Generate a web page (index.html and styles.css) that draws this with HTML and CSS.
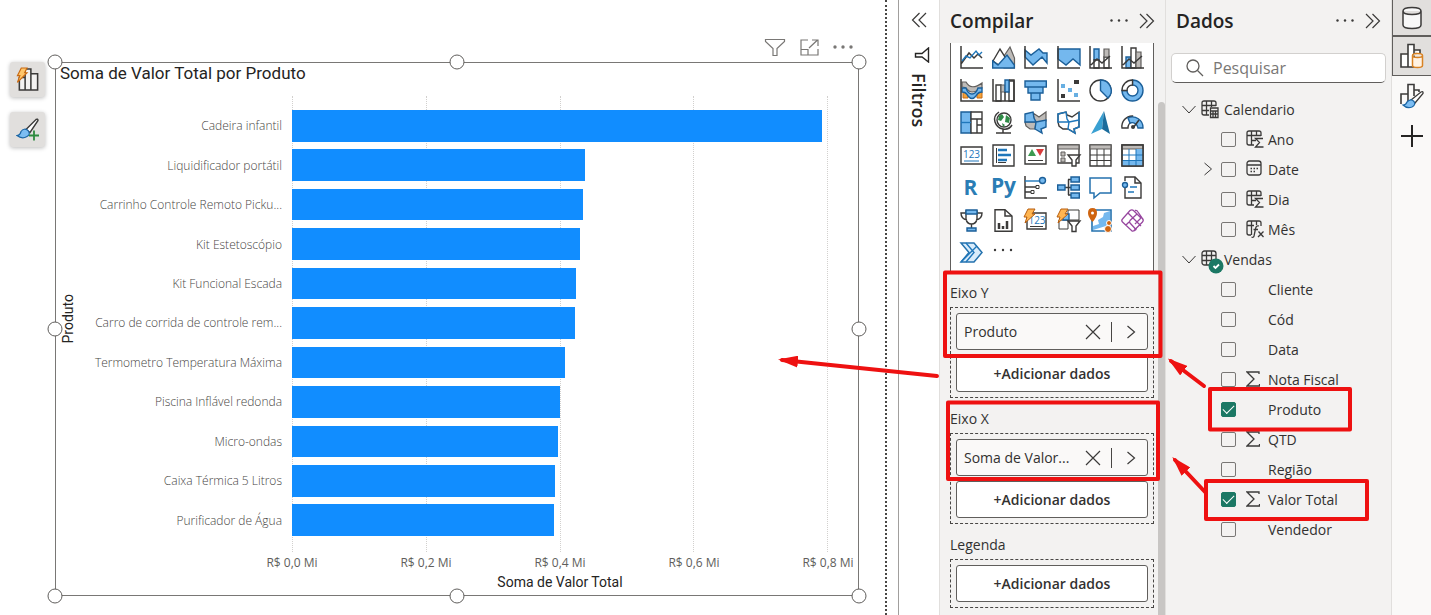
FILE: index.html
```html
<!DOCTYPE html>
<html lang="pt-BR">
<head>
<meta charset="utf-8">
<title>Soma de Valor Total por Produto</title>
<link rel="stylesheet" href="styles.css">
</head>
<body>
<svg class="sprite" aria-hidden="true">
  <symbol id="chev-right" viewBox="0 0 10 14"><path d="M1.500 1L8.500 7L1.500 13"/></symbol>
  <symbol id="chev-down" viewBox="0 0 14 9"><path d="M.5 1L7 8L13.500 1"/></symbol>
  <symbol id="chev-double" viewBox="0 0 16 16"><path d="M1 1L8 8L1 15M7.500 1L14.500 8L7.500 15"/></symbol>
  <symbol id="close" viewBox="0 0 16 16"><path d="M1 1L15 15M15 1L1 15"/></symbol>
  <symbol id="sigma" viewBox="0 0 14 16"><path d="M13 3V1H1L8 8L1 15H13.500V13"/></symbol>
  <symbol id="col-sigma" viewBox="0 0 18 18"><path d="M15 6V3Q15 1 13 1H3Q1 1 1 3V13Q1 15 3 15H8M5.500 1V15M10.500 1V5M1 5.500H15M5.500 10.500H10M17 8.500H9.500L13.500 12.500L9.500 17H17.500"/></symbol>
</svg>

<div class="app">
  <main class="canvas">
    <div class="visual-tools">
      <button class="tool" aria-label="Criar visual"><svg viewBox="0 0 24 26"><g fill="#f3f2f1" stroke="#3b3a39" stroke-width="1.600"><path d="M3 11h6v13H3zM9 2h6v22H9zM15 7h7v17h-7z"/></g><path d="M5 1h6L8.500 6H11L1 16L3.500 9H1z" fill="#ffc66b" stroke="#c96a12" stroke-width="1.200"/></svg></button>
      <button class="tool" aria-label="Formatar visual"><svg viewBox="0 0 24 24"><path d="M10 12L20 2q2-1 2 1L14 15z" fill="#fff" stroke="#3b3a39" stroke-width="1.400"/><path d="M1 18q3 0 4-4 3-4 7-1 3 4-1 6-5 3-10-1z" fill="#7cbdf2" stroke="#1b66a5" stroke-width="1.200"/><path d="M18 13v10M13 18h10" stroke="#2d8a3e" stroke-width="1.800"/></svg></button>
    </div>
    <div class="visual-wrap">
      <div class="visual-header">
        <button class="bare" aria-label="Filtros do visual"><svg width="22" height="19" viewBox="0 0 22 19"><path d="M1.500 1.500h19v2L13 10.500V17.500H9V10.500L1.500 3.500z"/></svg></button>
        <button class="bare" aria-label="Modo de foco"><svg width="19" height="17" viewBox="0 0 19 17"><path d="M8 1H1V16H18V10M1 10.500H8V16M9 9L17.500 1M12 1H18V7"/></svg></button>
        <button class="bare" aria-label="Mais opções"><svg width="20" height="4" viewBox="0 0 20 4"><g class="dots"><circle cx="2" cy="2" r="1.700"/><circle cx="10" cy="2" r="1.700"/><circle cx="18" cy="2" r="1.700"/></g></svg></button>
      </div>
      <section class="visual">
        <h1 class="chart-title">Soma de Valor Total por Produto</h1>
        <div class="chart-body">
          <div class="y-title"><span>Produto</span></div>
          <div class="plot">
            <div class="gridlines"><i></i><i></i><i></i><i></i></div>
            <span class="cat r1">Cadeira infantil</span><div class="bar r1" style="width:98.9%"></div>
            <span class="cat r2">Liquidificador portátil</span><div class="bar r2" style="width:54.7%"></div>
            <span class="cat r3">Carrinho Controle Remoto Picku...</span><div class="bar r3" style="width:54.2%"></div>
            <span class="cat r4">Kit Estetoscópio</span><div class="bar r4" style="width:53.7%"></div>
            <span class="cat r5">Kit Funcional Escada</span><div class="bar r5" style="width:53%"></div>
            <span class="cat r6">Carro de corrida de controle rem...</span><div class="bar r6" style="width:52.8%"></div>
            <span class="cat r7">Termometro Temperatura Máxima</span><div class="bar r7" style="width:51%"></div>
            <span class="cat r8">Piscina Inflável redonda</span><div class="bar r8" style="width:50%"></div>
            <span class="cat r9">Micro-ondas</span><div class="bar r9" style="width:49.6%"></div>
            <span class="cat r10">Caixa Térmica 5 Litros</span><div class="bar r10" style="width:49.1%"></div>
            <span class="cat r11">Purificador de Água</span><div class="bar r11" style="width:48.9%"></div>
          </div>
        </div>
        <div class="x-axis">
          <div class="ticks"><span><b>R$ 0,0 Mi</b></span><span><b>R$ 0,2 Mi</b></span><span><b>R$ 0,4 Mi</b></span><span><b>R$ 0,6 Mi</b></span><span><b>R$ 0,8 Mi</b></span></div>
          <div class="x-title">Soma de Valor Total</div>
        </div>
        <i class="handle tl"></i><i class="handle tc"></i><i class="handle tr"></i><i class="handle ml"></i><i class="handle mr"></i><i class="handle bl"></i><i class="handle bc"></i><i class="handle br"></i>
      </section>
    </div>
  </main>

  <aside class="filters">
    <button class="bare" aria-label="Expandir filtros"><svg class="flip" width="16" height="16"><use href="#chev-double"/></svg></button>
    <svg class="funnel" width="16" height="16" viewBox="0 0 16 16"><path d="M14.500 1V15L8 10H1.500V6.500H8L14.500 1z"/></svg>
    <h2>Filtros</h2>
  </aside>

  <section class="build">
    <header class="pane-head">
      <h2>Compilar</h2>
      <button class="bare more" aria-label="Mais opções"><svg width="18" height="3" viewBox="0 0 18 3"><g class="dots"><circle cx="1.500" cy="1.500" r="1.200"/><circle cx="9" cy="1.500" r="1.200"/><circle cx="16.500" cy="1.500" r="1.200"/></g></svg></button>
      <button class="bare" aria-label="Recolher Compilar"><svg width="16" height="16"><use href="#chev-double"/></svg></button>
    </header>
    <div class="build-scroll">
      <div class="build-body">
        <div class="gallery">
          <svg viewBox="0 0 23 23"><path class="k" d="M1 0V22H23M1 18L9 7L14 12L18 8L22 12"/><path class="b" d="M2 15L6 10L10 12L16 5L19 9L22 6"/></svg>
          <svg viewBox="0 0 23 23"><path class="g" d="M12 10L18 1L22.500 12V22H12z"/><path class="w" d="M1 15L8 3L15 14L8 20z"/><path class="f" d="M.7 22V15L6 19L15 9L22.300 19V22z"/></svg>
          <svg viewBox="0 0 23 23"><path class="f" d="M1 4L7 9L15 3L19 7H23V17L18 11L9 19L1 11z"/><path class="k" d="M1 0V22H23"/></svg>
          <svg viewBox="0 0 23 23"><path class="f" d="M1 3H23V19L16 13L9 19L1 13z"/><path class="k" d="M1 0V22H23"/></svg>
          <svg viewBox="0 0 23 23"><path class="f" d="M5 3H10V14H5z"/><path class="w" d="M5 14H10V22H5zM15 11H20V22H15z"/><path class="g" d="M15 3H20V11H15z"/><path class="k" d="M1 0V22H23M2 19L8 13L13 17L21 10"/></svg>
          <svg viewBox="0 0 23 23"><path class="f" d="M5 11H10V22H5z"/><path class="w" d="M10 2H15V22H10z"/><path class="g" d="M15 6H20V22H15z"/><path class="k" d="M1 0V22H23M2 19L8 13L13 17L21 10"/></svg>

          <svg viewBox="0 0 23 23"><path class="o" d="M3 13H8V19H3zM17 13H22V19H17z"/><path class="g" d="M2 3H6Q11 12 22 4V9Q13 15 9 12Q6 8 2 8z"/><path class="f" d="M2 9H6Q8 15 12 15T18 9H22V13Q18 13 16 17Q12 22 8 17Q6 13 2 13z"/><path class="k" d="M1 0V22H23"/></svg>
          <svg viewBox="0 0 23 23"><path class="w" d="M4 6H9V22H4zM17 2H22V22H17z"/><path class="g" d="M9 6H13V13H9z"/><path class="f" d="M13 1H17V13H13z"/><path class="k" d="M1 0V22H23M17 1H22V22M13 13V22"/></svg>
          <svg viewBox="0 0 23 23"><path class="f" d="M1 2H22.300V8H1zM4 8H19V14H4zM7 14H16V21H7z"/></svg>
          <svg viewBox="0 0 23 23"><path class="k" d="M1 0V22H23"/><path fill="#3b3a39" d="M17 1h5v4h-5zM4 15h4v4H4z"/><path fill="#68afe2" d="M4 5h4v4H4zM11 9h4v4h-4zM17 14h4v4h-4z"/></svg>
          <svg viewBox="0 0 23 23"><circle class="w" cx="11.500" cy="11.500" r="10.500"/><path class="f" d="M11.500 1A10.500 10.500 0 0 1 19 19L11.500 11.500z"/></svg>
          <svg viewBox="0 0 23 23"><path class="f" fill-rule="evenodd" d="M11.500 1A10.500 10.500 0 1 1 1 11.500H6A5.500 5.500 0 1 0 11.500 6z"/><path class="w" d="M1 11.500A10.500 10.500 0 0 1 11.500 1V6A5.500 5.500 0 0 0 6 11.500z"/></svg>

          <svg viewBox="0 0 23 23"><path class="f" d="M1 1H11V22H1z"/><path class="w" d="M11 1H22V8H11zM11 8H17V22H11zM17 8H22V14H17zM17 14H22V22H17z"/><path class="b" d="M1 11.500H11"/></svg>
          <svg viewBox="0 0 23 23"><circle class="w" cx="12" cy="9" r="7"/><path fill="#2f8a46" d="M7 5L10 3L12 6L9 10L6 9zM14 4L18 7L17 12L13 11zM10 12L13 14L11 16z"/><path class="k" d="M7 1Q1 5 3 11T11 18Q17 19 20 14M11 18V22M4 22H19"/></svg>
          <svg viewBox="0 0 23 23"><path class="g" d="M9 2L15 6L22 1V10L13 12L10 8zM1 11H12L11 18H6L2 15z"/><path class="f" d="M1 3L9 1L10 7L12 11H1zM12 11L22 9V16L17 18L18 22L11 18z"/></svg>
          <svg viewBox="0 0 23 23"><path class="w" d="M1 3L9 1L10 4L15 6L22 1V16L17 18L18 22L11 18H6L2 15L1 11z"/><path class="b" d="M1 3L9 1L10 8L12 11H1zM12 11L22 9M12 11L11 18L18 22L17 18L22 16V1"/></svg>
          <svg viewBox="0 0 23 23"><path d="M15 0L2 23L13 18z" fill="#39a0d2"/><path d="M15 0L21 23L13 18z" fill="#1b6c9c"/></svg>
          <svg viewBox="0 0 23 23"><path class="w" d="M1 17A10.500 10.500 0 0 1 11.500 5V11A5 6 0 0 0 7 17z"/><path class="f" d="M7 7A10.500 10.500 0 0 1 22 17H17A6 6 0 0 0 9 12z"/><path class="k" d="M12 17L18 9"/><circle cx="12" cy="16" r="2" fill="#3b3a39"/></svg>

          <svg viewBox="0 0 23 23"><path class="w" d="M1 3H22V20H1z"/><text class="num" x="11.500" y="14">123</text><path class="b thin" d="M4 17H19"/></svg>
          <svg viewBox="0 0 23 23"><path class="w" d="M1 1H22V22H1z"/><path class="k thin" d="M4.500 4V19"/><path d="M6 6h9M6 11h13M6 16h9" stroke="#1f77bb" stroke-width="2.500"/><path class="thin k" d="M6 18.500H14"/></svg>
          <svg viewBox="0 0 23 23"><path class="w" d="M1 2H22V20H1z"/><path d="M4 12L8 5L12 12z" fill="#3c9a50"/><path d="M12 5H20L16 12z" fill="#d93b3b"/><path class="k thin" d="M4 16.500H19"/></svg>
          <svg viewBox="0 0 23 23"><path class="w" d="M1 1H22V19H1z"/><path class="g" d="M1 1H22V5H1z"/><path class="g thin" d="M4 8H8V12H4zM4 14H8V18H4z"/><path class="w" d="M11 11H23L19 16V22H15V16z"/></svg>
          <svg viewBox="0 0 23 23"><path class="w" d="M1 1H22V22H1z"/><path class="g" d="M1 1H22V5H1z"/><path class="k thin" d="M1 11H22M1 16.500H22M8 5V22M15 5V22"/></svg>
          <svg viewBox="0 0 23 23"><path class="w" d="M1 1H22V22H1z"/><path class="g" d="M1 1H22V5H1z"/><path fill="#74b8ee" d="M15 5H22V22H1V16.500H15z"/><path class="b thin" d="M1 11H22M1 16.500H22M8 5V22M15 5V22"/><path class="k" d="M1 1H22V22H1z"/></svg>

          <svg viewBox="0 0 23 23"><text class="letters" x="10.500" y="19">R</text></svg>
          <svg viewBox="0 0 23 23"><text class="letters" x="11.500" y="17">Py</text></svg>
          <svg viewBox="0 0 23 23"><path class="k" d="M1 0V22H23M1 11H13M1 16H7"/><path class="b" d="M1 5H16"/><circle class="f" cx="18.500" cy="4.500" r="3"/><path class="w thin" d="M12 9.500h3v3h-3zM7 14.500h3v3H7z"/></svg>
          <svg viewBox="0 0 23 23"><path class="k" d="M8 11.500H15M11 3.500H15M11 19H15M11.500 3.500V19"/><path class="f" d="M.7 9H8V14H.7zM14 1H22.300V6H14zM14 9H22.300V14H14zM14 17H22.300V22H14z"/></svg>
          <svg viewBox="0 0 23 23"><path d="M1 2H22V17H11L5 22V17H1z" fill="#fff" stroke="#2472ae" stroke-width="1.500"/></svg>
          <svg viewBox="0 0 23 23"><path class="w" d="M4 5V1H14L20 7V22H4V12"/><path class="k" d="M14 1V7H20"/><circle class="f" cx="4" cy="9" r="2.500"/><path class="b" d="M9 11H16M7 16H13"/></svg>

          <svg viewBox="0 0 23 23"><path class="w" d="M6 2H17V10Q16 15 11.500 15T6 10zM6 4H1Q1 10 7 11M17 4H22Q22 10 16 11M11.500 15V19"/><path class="f" d="M6 1H17V5H6zM7 19H16V22H7z"/></svg>
          <svg viewBox="0 0 23 23"><path class="w" d="M3 0.700H13L20 7V22.300H3z"/><path class="k" d="M13 1V7H20"/><path d="M7 14V20M11 17V20M15 12V20" stroke="#3b3a39" stroke-width="2.500"/></svg>
          <svg viewBox="0 0 23 23"><path class="w" d="M3 4H22V20H3z"/><text class="num" x="13" y="15">123</text><path class="k thin" d="M6 17.500H19"/><path class="bolt" d="M4 0H11L8 5H11L1 14L3 8H0z"/></svg>
          <svg viewBox="0 0 23 23"><path class="w thin" d="M11 1H22V11H11zM2 11H11V20H2z"/><path class="f" d="M6 5H12V11H6z"/><path class="w" d="M11 12H23L19 17V22.500H15V17z"/><path class="bolt" d="M4 0H11L8 5H11L1 14L3 8H0z"/></svg>
          <svg viewBox="0 0 23 23"><path d="M3 1H22V22H3z" fill="#fff" stroke="#2472ae" stroke-width="1.600"/><path fill="#74b8ee" d="M15 4L21 2V11L17 17L4 21V17L10 15L9 11L14 8z"/><path fill="#cf6410" d="M-1 4Q-1 -1 3.500 -1T8 4Q8 8 3.500 13Q-1 8 -1 4z"/><circle cx="3.500" cy="4" r="1.500" fill="#fff"/><circle cx="20" cy="14" r="2.500" fill="#cf6410" stroke="#fff" stroke-width="1"/><circle cx="19" cy="20" r="3.500" fill="#cf6410" stroke="#fff" stroke-width="1"/></svg>
          <svg viewBox="0 0 23 23"><path class="p" d="M9 1.500Q11 0 13 2L16 5L9 11.500Q8 13 9 14L15 20.500Q13 22.500 11 22L1.500 13Q0 11.500 1.500 10zM14 1.500Q16 1 17 3L21.500 9.500Q23 11.500 21.500 13L13 21.500M7 4L14 11L20 17M8 13L5 16M16 5L20 9L14 15"/></svg>

          <svg viewBox="0 0 23 23"><path d="M1 2H14L22 11.500L14 21H1L9 11.500z" fill="#d9ecfb" stroke="#2472ae" stroke-width="1.500"/><path class="b" d="M6 2L14 11.500L6 21M1 21L17 5"/></svg>
          <svg viewBox="0 0 23 23"><g fill="#3b3a39"><circle cx="3" cy="9" r="1.200"/><circle cx="11" cy="9" r="1.200"/><circle cx="19" cy="9" r="1.200"/></g></svg>
        </div>

        <h3>Eixo Y</h3>
        <div class="well">
          <div class="field"><span>Produto</span><button class="bare" aria-label="Remover"><svg width="16" height="16"><use href="#close"/></svg></button><i class="sep"></i><button class="bare" aria-label="Abrir menu"><svg width="10" height="14"><use href="#chev-right"/></svg></button></div>
          <button class="add">+Adicionar dados</button>
        </div>
        <h3>Eixo X</h3>
        <div class="well">
          <div class="field"><span>Soma de Valor...</span><button class="bare" aria-label="Remover"><svg width="16" height="16"><use href="#close"/></svg></button><i class="sep"></i><button class="bare" aria-label="Abrir menu"><svg width="10" height="14"><use href="#chev-right"/></svg></button></div>
          <button class="add">+Adicionar dados</button>
        </div>
        <h3>Legenda</h3>
        <div class="well"><button class="add">+Adicionar dados</button></div>
      </div>
      <div class="scrollbar"></div>
    </div>
  </section>

  <section class="data">
    <header class="pane-head">
      <h2>Dados</h2>
      <button class="bare more" aria-label="Mais opções"><svg width="18" height="3" viewBox="0 0 18 3"><g class="dots"><circle cx="1.500" cy="1.500" r="1.200"/><circle cx="9" cy="1.500" r="1.200"/><circle cx="16.500" cy="1.500" r="1.200"/></g></svg></button>
      <button class="bare" aria-label="Recolher Dados"><svg width="16" height="16"><use href="#chev-double"/></svg></button>
    </header>
    <div class="search">
      <svg width="18" height="18" viewBox="0 0 18 18"><circle cx="7" cy="7" r="6"/><path d="M11.500 11.500L17 17"/></svg>
      <input type="text" placeholder="Pesquisar" aria-label="Pesquisar">
    </div>
    <div class="tree">
      <div class="table-row"><svg width="14" height="9"><use href="#chev-down"/></svg><svg class="ti" viewBox="0 0 18 18"><path d="M15 6V3Q15 1 13 1H3Q1 1 1 3V13Q1 15 3 15H8M5.500 1V15M10.500 1V7M1 5.500H15M1 10.500H8"/><path d="M9.500 8H17V17.500H9.500zM9.500 11H17M12 11V17M14.500 11V17M9.500 14H17"/></svg><span>Calendario</span></div>
      <label class="row"><i></i><input type="checkbox"><svg class="ti"><use href="#col-sigma"/></svg>Ano</label>
      <label class="row"><svg width="10" height="14"><use href="#chev-right"/></svg><input type="checkbox"><svg class="ti" viewBox="0 0 18 18"><rect x="1" y="1" width="14" height="14" rx="2.500"/><path d="M1 5H15M4.500 8.500h1.500M7.500 8.500H9M10.500 8.500H12M4.500 11.500h1.500M7.500 11.500H9"/></svg>Date</label>
      <label class="row"><i></i><input type="checkbox"><svg class="ti"><use href="#col-sigma"/></svg>Dia</label>
      <label class="row"><i></i><input type="checkbox"><svg class="ti" viewBox="0 0 18 18"><path d="M15 6V3Q15 1 13 1H3Q1 1 1 3V13Q1 15 3 15H5M5.500 1V15M10.500 1V5M1 5.500H8M13 6Q10 5 9.500 9L8 16Q7.500 18 5.500 17M7.500 9.500H12M12.500 11.500L17.500 17M17.500 11.500L12 17"/></svg>Mês</label>
      <div class="table-row"><svg width="14" height="9"><use href="#chev-down"/></svg><svg class="ti" viewBox="0 0 18 18"><rect x="1" y="1" width="14" height="14" rx="2.500"/><path d="M5.500 1V15M10.500 1V15M1 5.500H15M1 10.500H15"/><circle cx="15" cy="16" r="7.500" fill="#1b7864" stroke="none"/><path d="M12.500 16L14.500 18L18 14.500" stroke="#fff" stroke-width="1.800"/></svg><span>Vendas</span></div>
      <label class="row"><i></i><input type="checkbox"><i class="ti"></i>Cliente</label>
      <label class="row"><i></i><input type="checkbox"><i class="ti"></i>Cód</label>
      <label class="row"><i></i><input type="checkbox"><i class="ti"></i>Data</label>
      <label class="row"><i></i><input type="checkbox"><svg class="ti sg"><use href="#sigma"/></svg>Nota Fiscal</label>
      <label class="row"><i></i><input type="checkbox" checked><i class="ti"></i>Produto</label>
      <label class="row"><i></i><input type="checkbox"><svg class="ti sg"><use href="#sigma"/></svg>QTD</label>
      <label class="row"><i></i><input type="checkbox"><i class="ti"></i>Região</label>
      <label class="row"><i></i><input type="checkbox" checked><svg class="ti sg"><use href="#sigma"/></svg>Valor Total</label>
      <label class="row"><i></i><input type="checkbox"><i class="ti"></i>Vendedor</label>
    </div>
  </section>

  <nav class="rail">
    <button class="on first" aria-label="Dados"><svg width="20" height="24" viewBox="0 0 20 24"><path fill="#f8f8f8" stroke="#3b3a39" stroke-width="1.500" d="M1 5Q1 1.500 10 1.500T19 5V19Q19 22.500 10 22.500T1 19zM1 5Q1 8.500 10 8.500T19 5"/></svg></button>
    <button class="on" aria-label="Compilar"><svg width="24" height="26" viewBox="0 0 24 26"><path fill="#fff" stroke="#3b3a39" stroke-width="1.600" d="M1 11H8V24H1zM8 1.500H14V24H8zM14 7H20V12"/><path fill="#fff3e4" stroke="#d98324" stroke-width="1.500" d="M12.500 12.500Q12.500 10.500 17.500 10.500T22.500 12.500V22.500Q22.500 24.500 17.500 24.500T12.500 22.500zM12.500 12.500Q12.500 14.500 17.500 14.500T22.500 12.500"/></svg></button>
    <button aria-label="Formatar"><svg width="24" height="26" viewBox="0 0 24 26"><path fill="none" stroke="#3b3a39" stroke-width="1.600" d="M1 21V11H8V19M8 11V1.500H14V13M14 7H19V9"/><path fill="#fff" stroke="#3b3a39" stroke-width="1.300" d="M11 17L21 9Q23.500 8 23 10.500L15 20z"/><path fill="#7cbdf2" stroke="#1b66a5" stroke-width="1.200" d="M3 22Q6 22 7 19Q11 15 14 18.500Q16 22 12 24Q7 26 3 22z"/></svg></button>
    <button aria-label="Adicionar"><svg width="22" height="22" viewBox="0 0 22 22"><path d="M11 0V22M0 11H22" stroke="#252423" stroke-width="2"/></svg></button>
  </nav>

  <svg class="marks" viewBox="0 0 660 615" aria-hidden="true">
    <defs><marker id="head" markerWidth="20" markerHeight="12" refX="16" refY="6" orient="auto" markerUnits="userSpaceOnUse"><path d="M0 0L20 6L0 12z"/></marker></defs>
    <path d="M174 272.500H389.500V356H174z"/>
    <path d="M177 402.500H387V479H177z"/>
    <path d="M439 389H579V429.500H439z"/>
    <path d="M435 481H596V519H435z"/>
    <path d="M166 376L11 360" marker-end="url(#head)"/>
    <path d="M433 386L400 361" marker-end="url(#head)"/>
    <path d="M435 493L404 460" marker-end="url(#head)"/>
  </svg>
</div>
</body>
</html>
```
FILE: styles.css
```css
* { box-sizing: border-box; }

body {
  margin: 0;
  font-family: "Open Sans", "Noto Sans", sans-serif;
  font-size: 14px;
  color: #323130;
  background: #fff;
}

h1, h2, h3 { margin: 0; }

button { font: inherit; color: inherit; }

svg { flex: none; }

.sprite { position: absolute; width: 0; height: 0; }

.app {
  position: relative;
  display: flex;
  height: 100vh;
  min-height: 615px;
  overflow: hidden;
}

.bare {
  display: flex;
  padding: 0;
  border: 0;
  background: none;
  fill: none;
  stroke: #3b3a39;
  stroke-width: 1.2;
}

.dots { fill: #3b3a39; stroke: none; }

/* Report canvas */
.canvas {
  display: flex;
  flex: 1;
  min-width: 0;
  margin-right: 11px;
  border-right: 2px dotted #484644;
}

.visual-tools {
  display: flex;
  flex-direction: column;
  gap: 15px;
  width: 55px;
  padding: 62px 0 0 10px;
}

.tool {
  display: flex;
  align-items: center;
  justify-content: center;
  width: 35px;
  height: 35px;
  padding: 0;
  border: 0;
  border-radius: 3px;
  background: #e1dfdd;
  box-shadow: 0 1px 4px #0004;
}

.tool svg { width: 24px; height: 25px; fill: none; }

.visual-wrap {
  display: flex;
  flex: 1;
  flex-direction: column;
  min-width: 0;
  padding: 0 26px 19px 0;
}

.visual-header {
  display: flex;
  align-items: center;
  justify-content: flex-end;
  gap: 14px;
  height: 62px;
  padding: 32px 6px 0 0;
}

.visual-header .bare { stroke: #797775; }
.visual-header .dots { fill: #797775; }

.visual {
  position: relative;
  display: flex;
  flex: 1;
  flex-direction: column;
  box-shadow: inset 0 0 0 1px #797775;
}

.chart-title {
  height: 24px;
  padding-left: 5px;
  font: 400 17px/23px Roboto, sans-serif;
  color: #252423;
}

.chart-body { display: flex; flex: 1; }

.y-title {
  display: flex;
  align-items: center;
  justify-content: center;
  width: 25px;
  font: 400 14px/16px Roboto, sans-serif;
  color: #252423;
}

.y-title span { writing-mode: vertical-rl; transform: rotate(180deg); }

.plot {
  display: grid;
  flex: 1;
  grid-template-columns: 212px 1fr;
  grid-template-rows: repeat(11, 1fr);
  align-items: center;
  margin: 10px 31px 0 0;
  padding: 10px 0 12px;
}

.gridlines {
  display: flex;
  grid-row: 1 / -1;
  grid-column: 2;
  align-self: stretch;
  margin: -10px 0 -12px;
}

.gridlines i { flex: 1; border-left: 1px dotted #d2d0ce; }
.gridlines i:last-child { border-right: 1px dotted #d2d0ce; }

.cat {
  grid-column: 1;
  padding-right: 10px;
  font-size: 12px;
  font-weight: 300;
  text-align: right;
  white-space: nowrap;
  color: #484644;
}

.bar { grid-column: 2; height: 80%; background: #118dff; }

.r1 { grid-row: 1; }
.r2 { grid-row: 2; }
.r3 { grid-row: 3; }
.r4 { grid-row: 4; }
.r5 { grid-row: 5; }
.r6 { grid-row: 6; }
.r7 { grid-row: 7; }
.r8 { grid-row: 8; }
.r9 { grid-row: 9; }
.r10 { grid-row: 10; }
.r11 { grid-row: 11; }

.x-axis { padding: 1px 31px 5px 237px; }

.ticks {
  display: flex;
  justify-content: space-between;
  font-size: 12px;
  line-height: 20px;
  color: #605e5c;
}

.ticks span { display: flex; justify-content: center; width: 0; }
.ticks b { font-weight: 400; white-space: nowrap; }

.x-title {
  font: 400 14px/18px Roboto, sans-serif;
  text-align: center;
  color: #252423;
}

.handle {
  position: absolute;
  width: 15px;
  height: 15px;
  border: 1px solid #605e5c;
  border-radius: 50%;
  background: #fff;
  transform: translate(-50%, -50%);
}

.tl { left: 0; top: 0; }
.tc { left: 50%; top: 0; }
.tr { left: 100%; top: 0; }
.ml { left: 0; top: 50%; }
.mr { left: 100%; top: 50%; }
.bl { left: 0; top: 100%; }
.bc { left: 50%; top: 100%; }
.br { left: 100%; top: 100%; }

/* Collapsed filters pane */
.filters {
  display: flex;
  flex-direction: column;
  align-items: center;
  width: 42px;
  padding-top: 12px;
  border-left: 1px solid #a19f9d;
  border-right: 1px solid #e1dfdd;
}

.flip { transform: scaleX(-1); }

.funnel {
  margin: 19px 0 10px 6px;
  fill: none;
  stroke: #252423;
  stroke-width: 1.4;
}

.filters h2 {
  writing-mode: vertical-rl;
  font-size: 18px;
  font-weight: 600;
  line-height: 20px;
  color: #252423;
}

/* Side panes */
.pane-head {
  display: flex;
  align-items: center;
  height: 43px;
  padding: 0 10px 2px 10px;
}

.pane-head h2 {
  flex: 1;
  font-size: 19px;
  font-weight: 600;
  color: #252423;
}

.pane-head .more { margin-right: 11px; }

.build {
  display: flex;
  flex-direction: column;
  width: 225px;
  background: #f3f2f1;
}

.build-scroll { display: flex; flex: 1; min-height: 0; }

.build-body {
  flex: 1;
  min-width: 0;
  padding: 0 4px 0 10px;
}

.scrollbar {
  width: 7px;
  margin-top: 59px;
  border-radius: 4px 4px 0 0;
  background: #c8c6c4;
}

.gallery {
  display: grid;
  grid-template-columns: repeat(6, 1fr);
  align-content: space-between;
  justify-items: center;
  height: 229px;
  padding: 3px 4px 8px;
  border: solid #605e5c;
  border-width: 0 1px;
  background: #fff;
}

.gallery svg { width: 23px; height: 23px; overflow: visible; fill: none; }

.k { fill: none; stroke: #3b3a39; stroke-width: 1.5; }
.b { fill: none; stroke: #1f77bb; stroke-width: 1.4; }
.w { fill: #fff; stroke: #3b3a39; stroke-width: 1.4; }
.f { fill: #74b8ee; stroke: #1b5f99; stroke-width: 1.4; }
.g { fill: #bebbb8; stroke: #605e5c; stroke-width: 1.2; }
.o { fill: #f2a23a; stroke: #c96a12; stroke-width: 1; }
.p { fill: none; stroke: #97469f; stroke-width: 1.3; }
.gallery .thin { stroke-width: 1; }
.bolt { fill: #ffb550; stroke: #b85f10; stroke-width: 1; }
.num { font-size: 10px; fill: #1f77bb; text-anchor: middle; }
.letters { font-size: 21px; font-weight: 700; fill: #2a7db5; text-anchor: middle; }

.build h3 {
  height: 35px;
  padding-top: 10px;
  font-size: 14px;
  font-weight: 400;
  line-height: 22px;
}

.well {
  display: flex;
  flex-direction: column;
  gap: 5px;
  padding: 5px;
  border: 1px dashed #484644;
}

.field, .add {
  display: flex;
  align-items: center;
  height: 37px;
  border: 1px solid #605e5c;
  border-radius: 3px;
}

.field { padding: 0 11px 0 7px; background: #faf9f8; }
.field span { flex: 1; white-space: nowrap; }
.sep { width: 1px; height: 20px; margin: 0 14px 0 10px; background: #484644; }

.add { justify-content: center; padding: 0; font-weight: 600; background: #fff; }

.data {
  width: 227px;
  border-left: 1px solid #e1dfdd;
  border-right: 1px solid #e1dfdd;
  background: #f3f2f1;
}

.search {
  display: flex;
  align-items: center;
  gap: 9px;
  height: 30px;
  margin: 10px 5px 11px;
  padding: 0 14px;
  border: 1px solid #d2d0ce;
  border-bottom-color: #605e5c;
  border-radius: 5px;
  background: #fff;
  fill: none;
  stroke: #605e5c;
  stroke-width: 1.3;
}

.search input {
  flex: 1;
  min-width: 0;
  padding: 0;
  border: 0;
  outline: 0;
  font: 16px "Open Sans", sans-serif;
  background: none;
}

.search input::placeholder { color: #797775; opacity: 1; }

.tree { fill: none; stroke: #3b3a39; stroke-width: 1.3; }

.table-row, .row { display: flex; align-items: center; height: 30px; }
.table-row { gap: 5px; padding-left: 16px; }
.table-row > :first-child, .row > :first-child { stroke-width: 1; }
.ti { flex: none; width: 18px; height: 18px; overflow: visible; }
.row { padding-left: 37px; }
.row > :first-child { width: 10px; margin-right: 8px; }
.row .ti { margin: 0 4px 0 10px; }
.row .sg { width: 14px; height: 16px; margin-right: 8px; }

.row input {
  appearance: none;
  flex: none;
  display: grid;
  place-items: center;
  width: 15px;
  height: 15px;
  margin: 0;
  border: 1px solid #797775;
  border-radius: 2px;
}

.row input:checked { border-color: #1b7864; background: #1b7864; }

.row input:checked::before {
  content: "";
  width: 10px;
  height: 5px;
  border: solid #fff;
  border-width: 0 0 1px 1px;
  transform: translateY(-1px) rotate(-45deg);
}

.rail { width: 39px; background: #faf9f8; }

.rail button {
  display: flex;
  align-items: center;
  justify-content: center;
  width: 100%;
  height: 40px;
  padding: 0;
  border: 0;
  background: none;
}

.rail .on { border: solid #605e5c; border-width: 1px 0 1px 1px; background: #e1dfdd; }
.rail .first { height: 36px; border-top: 0; }

/* Red highlight boxes and arrows over the panes */
.marks {
  position: absolute;
  top: 0;
  right: 0;
  width: 660px;
  height: 615px;
  fill: none;
  stroke: #ee1111;
  stroke-width: 4;
  stroke-linejoin: round;
  stroke-linecap: round;
  pointer-events: none;
}

.marks marker path { fill: #ee1111; stroke: none; }
```
